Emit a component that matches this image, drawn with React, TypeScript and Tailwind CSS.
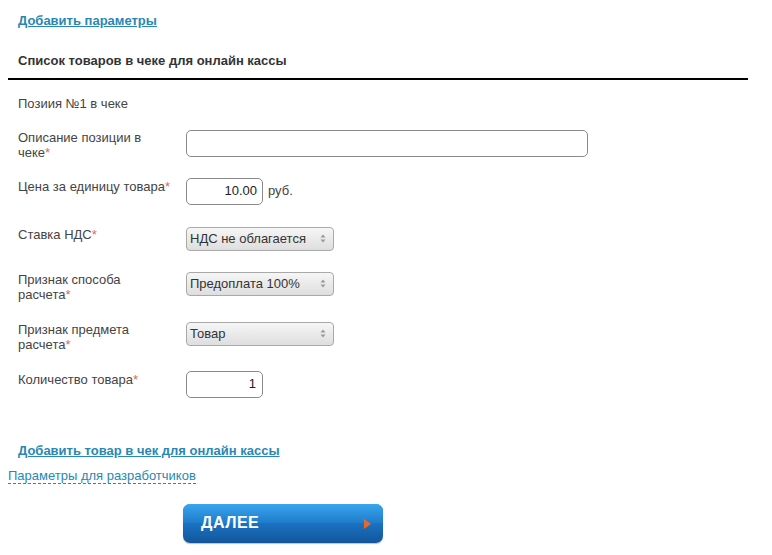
import { ReactNode } from "react";

const font = "font-['Liberation_Sans',Arial,sans-serif]";

function Star() {
  return <span className="text-[#e06a4a]">*</span>;
}

function Row({ label, height, children }: { label: ReactNode; height: string; children: ReactNode }) {
  return (
    <div className={`flex items-start ${height}`}>
      <div className="w-[186px] shrink-0 pl-[18px] pr-[14px] text-[13px] leading-[15px] text-[#444]">
        {label}
      </div>
      <div className="flex items-center">{children}</div>
    </div>
  );
}

function Select({ value }: { value: string }) {
  return (
    <div className="flex h-[24px] w-[148px] items-center justify-between rounded-[4px] border border-[#a9a9a9] bg-gradient-to-b from-[#f6f6f6] to-[#dedede] pl-[3px] pr-[7px] text-[13px] text-[#333]">
      <span>{value}</span>
      <svg width="6" height="9" viewBox="0 0 6 9" className="text-[#999]">
        <path d="M3 0.5 L5.5 3.5 H0.5 Z M3 8.5 L5.5 5.5 H0.5 Z" fill="currentColor" />
      </svg>
    </div>
  );
}

export default function App() {
  return (
    <div className={`${font} min-h-[555px] w-[772px] bg-white`}>
      {/* Header links */}
      <div className="pl-[18px] pt-[13px] text-[13px] leading-[16px]">
        <a href="#" className="font-bold text-[#2888b3] underline">
          Добавить параметры
        </a>
      </div>

      <div className="mt-[24px] pl-[18px] text-[13px] font-bold leading-[16px] text-[#333]">
        Список товаров в чеке для онлайн кассы
      </div>
      <div className="ml-[8px] mt-[9px] h-[1.5px] w-[740px] bg-black" />

      <div className="mt-[16px] pl-[18px] text-[13px] leading-[15px] text-[#444]">Позиия №1 в чеке</div>

      {/* Form rows */}
      <div className="mt-[19px]">
        <Row height="h-[48px]" label={<>Описание позиции в чеке<Star /></>}>
          <div className="h-[27px] w-[402px] rounded-[5px] border border-[#8a8a8a] bg-white" />
        </Row>
        <Row height="h-[49px]" label={<div className="pt-[1px]">Цена за единицу товара<Star /></div>}>
          <div className="flex h-[27px] w-[77px] items-center justify-end rounded-[5px] border border-[#8a8a8a] bg-white pr-[5px] text-[13px] text-[#222]">
            10.00
          </div>
          <span className="ml-[5px] text-[13px] text-[#444]">руб.</span>
        </Row>
        <Row height="h-[45px]" label={<>Ставка НДС<Star /></>}>
          <Select value="НДС не облагается" />
        </Row>
        <Row height="h-[50px]" label={<>Признак способа расчета<Star /></>}>
          <Select value="Предоплата 100%" />
        </Row>
        <Row height="h-[49px]" label={<>Признак предмета расчета<Star /></>}>
          <Select value="Товар" />
        </Row>
        <Row height="h-[27px]" label={<div className="pt-[1px]">Количество товара<Star /></div>}>
          <div className="flex h-[27px] w-[77px] items-center justify-end rounded-[5px] border border-[#8a8a8a] bg-white pr-[6px] text-[13px] text-[#222]">
            1
          </div>
        </Row>
      </div>

      <div className="mt-[45px] pl-[18px] text-[13px] leading-[16px]">
        <a href="#" className="font-bold text-[#2888b3] underline">
          Добавить товар в чек для онлайн кассы
        </a>
      </div>
      <div className="mt-[9px] pl-[8px] text-[13px] leading-[15px]">
        <a href="#" className="border-b border-dashed border-[#2888b3] text-[#2888b3]">
          Параметры для разработчиков
        </a>
      </div>

      {/* Next button */}
      <div className="mt-[21px] pl-[183px]">
        <button className="relative flex h-[39px] w-[200px] items-center overflow-hidden rounded-[7px] bg-gradient-to-b from-[#2b9ae6] via-[#1a72c2] to-[#13569a] pl-[18px] shadow-[0_1px_1px_rgba(0,0,0,0.25)]">
          <span className="absolute inset-x-0 top-0 h-[19px] bg-gradient-to-b from-[#39a6ee] to-[#1f7ccb]" />
          <span className="relative text-[16px] font-bold tracking-[0.5px] text-white">ДАЛЕЕ</span>
          <svg width="7" height="10" viewBox="0 0 7 10" className="absolute right-[12px] top-[15px]">
            <path d="M0 0 L7 5 L0 10 Z" fill="#e8682a" />
          </svg>
        </button>
      </div>
    </div>
  );
}
